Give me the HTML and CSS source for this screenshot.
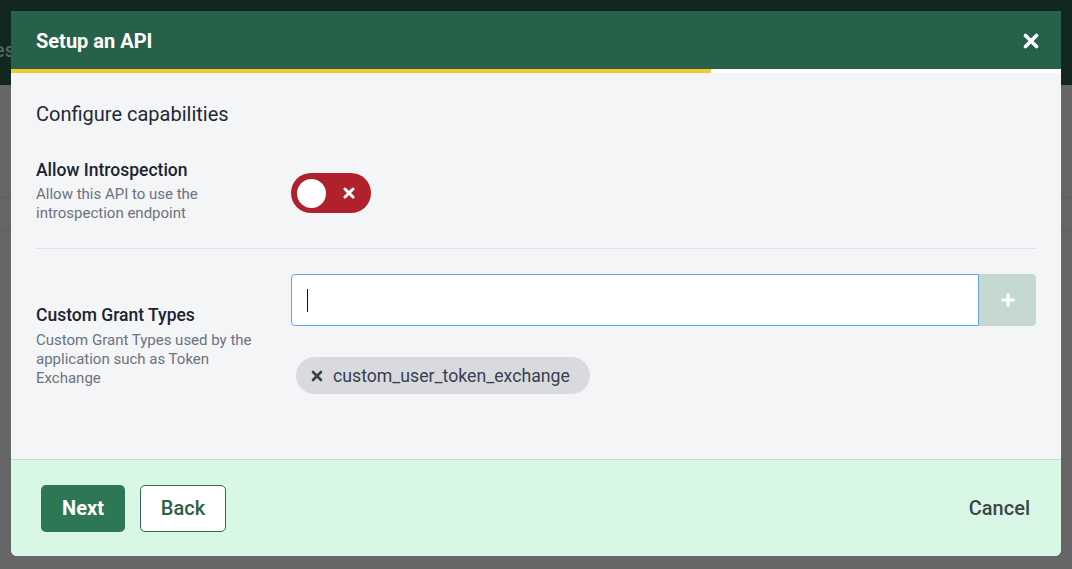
FILE: index.html
```html
<!DOCTYPE html>
<html>
<head>
<meta charset="utf-8">
<link rel="stylesheet" href="styles.css">
</head>
<body>
<div class="backdrop">
  <div class="bg-header"><span class="bg-text">es</span></div>
  <div class="bg-rest"><div class="bg-line l1"></div><div class="bg-line l2"></div></div>
</div>
<div class="dialog">
  <div class="dlg-header">
    <h1 class="dlg-title">Setup an API</h1>
    <button class="close-btn" aria-label="Close">
      <svg width="16" height="16" viewBox="0 0 16 16"><path d="M2.5 2.5 L13.5 13.5 M13.5 2.5 L2.5 13.5" stroke="#fff" stroke-width="3.6" stroke-linecap="round"/></svg>
    </button>
  </div>
  <div class="progress"><div class="progress-fill"></div></div>
  <div class="dlg-body">
    <h2 class="section-title">Configure capabilities</h2>
    <div class="row row-first">
      <div class="label-col">
        <div class="label">Allow Introspection</div>
        <div class="desc">Allow this API to use the introspection endpoint</div>
      </div>
      <div class="field-col">
        <div class="toggle">
          <span class="knob"></span>
          <svg class="toggle-x" width="12" height="12" viewBox="0 0 12 12"><path d="M2 2 L10 10 M10 2 L2 10" stroke="#fff" stroke-width="3" stroke-linecap="round"/></svg>
        </div>
      </div>
    </div>
    <div class="row row-second">
      <div class="label-col label-col-2">
        <div class="label">Custom Grant Types</div>
        <div class="desc">Custom Grant Types used by the application such as Token Exchange</div>
      </div>
      <div class="field-col field-col-2">
        <div class="input-group">
          <div class="text-input"><span class="caret"></span></div>
          <button class="add-btn" aria-label="Add">
            <svg width="16" height="16" viewBox="0 0 16 16"><path d="M8 1.5 V14.5 M1.5 8 H14.5" stroke="#fff" stroke-width="3"/></svg>
          </button>
        </div>
        <div class="chips">
          <span class="chip">
            <svg class="chip-x" width="12" height="12" viewBox="0 0 12 12"><path d="M2 2 L10 10 M10 2 L2 10" stroke="#3c4149" stroke-width="2.6" stroke-linecap="round"/></svg>
            <span class="chip-text">custom_user_token_exchange</span>
          </span>
        </div>
      </div>
    </div>
  </div>
  <div class="dlg-footer">
    <div class="footer-left">
      <button class="btn btn-primary">Next</button>
      <button class="btn btn-outline">Back</button>
    </div>
    <button class="btn-link">Cancel</button>
  </div>
</div>
</body>
</html>
```
FILE: styles.css
```css
* { box-sizing: border-box; }
html, body {
  margin: 0;
  padding: 0;
  width: 1072px;
  height: 569px;
  overflow: hidden;
}
body {
  font-family: Roboto, "Liberation Sans", Arial, sans-serif;
  background: #666666;
  position: relative;
}
.backdrop {
  position: absolute;
  inset: 0;
  display: flex;
  flex-direction: column;
}
.bg-header {
  height: 85px;
  background: #12271f;
  position: relative;
}
.bg-text {
  position: absolute;
  left: -6px;
  top: 38px;
  font-size: 20px;
  color: #4f6a5d;
  font-weight: 500;
}
.bg-rest {
  flex: 1;
  background: #666666;
  position: relative;
}
.bg-line {
  position: absolute;
  left: 0;
  right: 0;
  height: 1px;
  background: #5e5e5e;
}
.l1 { top: 112px; }
.l2 { top: 145px; }

.dialog {
  position: absolute;
  left: 11px;
  top: 11px;
  width: 1050px;
  height: 545px;
  background: #f4f5f7;
  border-radius: 0 0 6px 6px;
  display: flex;
  flex-direction: column;
  overflow: hidden;
}
.dlg-header {
  height: 58px;
  background: #27614a;
  display: flex;
  align-items: center;
  justify-content: space-between;
  padding: 2px 22px 0 25px;
}
.dlg-title {
  margin: 0;
  color: #ffffff;
  font-size: 20px;
  font-weight: 700;
  line-height: 24px;
}
.close-btn {
  background: none;
  border: 0;
  padding: 0;
  width: 16px;
  height: 16px;
  display: flex;
}
.progress {
  height: 4px;
  background: #ffffff;
}
.progress-fill {
  width: 700px;
  height: 4px;
  background: #f3ca2b;
}
.dlg-body {
  flex: 1;
  padding: 27px 25px 0 25px;
}
.section-title {
  margin: 0;
  font-size: 20px;
  font-weight: 400;
  line-height: 28px;
  color: #1f2937;
}
.row {
  display: flex;
  align-items: flex-start;
}
.row-first {
  margin-top: 30px;
  padding-bottom: 25px;
  border-bottom: 1px solid #e2e4e8;
}
.label-col {
  width: 255px;
  flex-shrink: 0;
}
.label {
  font-size: 17.5px;
  font-weight: 500;
  line-height: 25px;
  color: #1a2332;
}
.desc {
  margin-top: 2px;
  font-size: 15px;
  line-height: 19px;
  color: #6b7280;
  padding-right: 28px;
}
.field-col {
  flex: 1;
}
.toggle {
  margin-top: 15px;
  width: 80px;
  height: 40px;
  border-radius: 20px;
  background: #b0212b;
  display: flex;
  align-items: center;
  padding: 0 16px 0 6px;
  justify-content: space-between;
}
.knob {
  width: 29px;
  height: 29px;
  border-radius: 50%;
  background: #ffffff;
}
.toggle-x { display: block; }
.row-second {
  padding-bottom: 64px;
}
.label-col-2 {
  padding-top: 54px;
}
.label-col-2 .desc {
  margin-top: 3px;
}
.field-col-2 {
  padding-top: 25px;
}
.input-group {
  display: flex;
  height: 52px;
}
.text-input {
  flex: 1;
  background: #ffffff;
  border: 1px solid #60a5fa;
  border-radius: 4px 0 0 4px;
  display: flex;
  align-items: center;
  padding-left: 15px;
}
.caret {
  width: 1px;
  height: 23px;
  background: #111111;
}
.add-btn {
  width: 57px;
  border: 0;
  background: #c5d8d2;
  border-radius: 0 4px 4px 0;
  display: flex;
  align-items: center;
  justify-content: center;
  padding: 0;
}
.chips {
  margin-top: 31px;
  padding-left: 5px;
  display: flex;
}
.chip {
  display: inline-flex;
  align-items: center;
  height: 37px;
  padding: 0 20px 0 15px;
  border-radius: 19px;
  background: #d8dade;
}
.chip-x { display: block; margin-right: 10px; }
.chip-text {
  font-size: 17.7px;
  color: #374151;
}
.dlg-footer {
  height: 97px;
  border-top: 1px solid #cfd8d3;
  background: #d8f8e5;
  display: flex;
  align-items: center;
  justify-content: space-between;
  padding: 0 31px 0 30px;
}
.footer-left {
  display: flex;
  gap: 15px;
}
.btn {
  height: 47px;
  border-radius: 5px;
  font-family: Roboto, "Liberation Sans", Arial, sans-serif;
  font-size: 20px;
  padding: 0;
}
.btn-primary {
  width: 84px;
  background: #2e7755;
  color: #ffffff;
  border: 0;
  font-weight: 700;
}
.btn-outline {
  width: 86px;
  background: #ffffff;
  border: 1px solid #2e6b4f;
  color: #2d5e47;
  font-weight: 500;
}
.btn-link {
  background: none;
  border: 0;
  padding: 0;
  font-family: Roboto, "Liberation Sans", Arial, sans-serif;
  font-size: 20px;
  color: #3f4448;
  font-weight: 500;
}
```
